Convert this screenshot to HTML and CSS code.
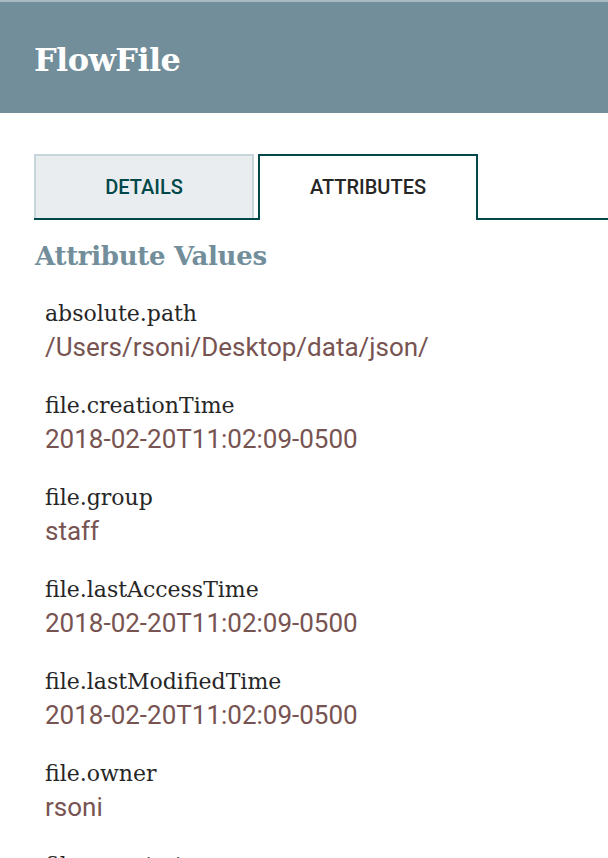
FILE: index.html
```html
<!DOCTYPE html>
<html>
<head>
<meta charset="utf-8">
<title>FlowFile</title>
<link rel="stylesheet" href="styles.css">
</head>
<body>
<header class="dialog-header">
  <h1 class="dialog-title">FlowFile</h1>
</header>
<main class="dialog-body">
  <ul class="tabs">
    <li class="tab">DETAILS</li>
    <li class="tab tab-active">ATTRIBUTES</li>
  </ul>
  <h2 class="section-title">Attribute Values</h2>
  <dl class="attr-list">
    <div class="attr">
      <dt class="attr-name">absolute.path</dt>
      <dd class="attr-value">/Users/rsoni/Desktop/data/json/</dd>
    </div>
    <div class="attr">
      <dt class="attr-name">file.creationTime</dt>
      <dd class="attr-value">2018-02-20T11:02:09-0500</dd>
    </div>
    <div class="attr">
      <dt class="attr-name">file.group</dt>
      <dd class="attr-value">staff</dd>
    </div>
    <div class="attr">
      <dt class="attr-name">file.lastAccessTime</dt>
      <dd class="attr-value">2018-02-20T11:02:09-0500</dd>
    </div>
    <div class="attr">
      <dt class="attr-name">file.lastModifiedTime</dt>
      <dd class="attr-value">2018-02-20T11:02:09-0500</dd>
    </div>
    <div class="attr">
      <dt class="attr-name">file.owner</dt>
      <dd class="attr-value">rsoni</dd>
    </div>
    <div class="attr">
      <dt class="attr-name">file.permissions</dt>
      <dd class="attr-value">rw-r--r--</dd>
    </div>
  </dl>
</main>
</body>
</html>
```

FILE: styles.css
```css
html, body {
  margin: 0;
  padding: 0;
  background: #ffffff;
  overflow: hidden;
}

body {
  width: 608px;
  height: 858px;
  font-family: Roboto, "Liberation Sans", sans-serif;
}

.dialog-header {
  box-sizing: border-box;
  height: 113px;
  border-top: 2px solid #a9b9c1;
  background: #728e9b;
  display: flex;
  align-items: center;
  padding-left: 34px;
}

.dialog-title {
  margin: 0;
  padding-top: 4px;
  font-family: "DejaVu Serif", serif;
  font-weight: bold;
  font-size: 32px;
  letter-spacing: -0.6px;
  color: #ffffff;
}

.dialog-body {
  padding: 41px 0 0 34px;
}

.tabs {
  list-style: none;
  margin: 0;
  padding: 0;
  display: flex;
  gap: 4px;
  border-bottom: 2px solid #004849;
  height: 64px;
}

.tab {
  box-sizing: border-box;
  width: 220px;
  height: 64px;
  display: flex;
  align-items: center;
  justify-content: center;
  background: #e9edf0;
  border: 2px solid #c7d6da;
  border-bottom: none;
  font-family: Roboto, sans-serif;
  font-weight: 500;
  font-size: 20px;
  color: #004849;
}

.tab-active {
  height: 66px;
  padding-bottom: 2px;
  background: #ffffff;
  border-color: #004849;
  color: #262626;
}

.section-title {
  margin: 20px 0 0 1px;
  font-family: "DejaVu Serif", serif;
  font-weight: bold;
  font-size: 26px;
  line-height: 32px;
  letter-spacing: -0.3px;
  color: #728e9b;
}

.attr-list {
  margin: 26px 0 0 11px;
  padding: 0;
}

.attr {
  margin-bottom: 28px;
}

.attr-name {
  font-family: "DejaVu Serif", serif;
  font-size: 22px;
  line-height: 32px;
  color: #262626;
}

.attr-value {
  margin: 0;
  padding-top: 2px;
  font-family: Roboto, sans-serif;
  font-size: 26px;
  line-height: 30px;
  color: #775351;
}
```
